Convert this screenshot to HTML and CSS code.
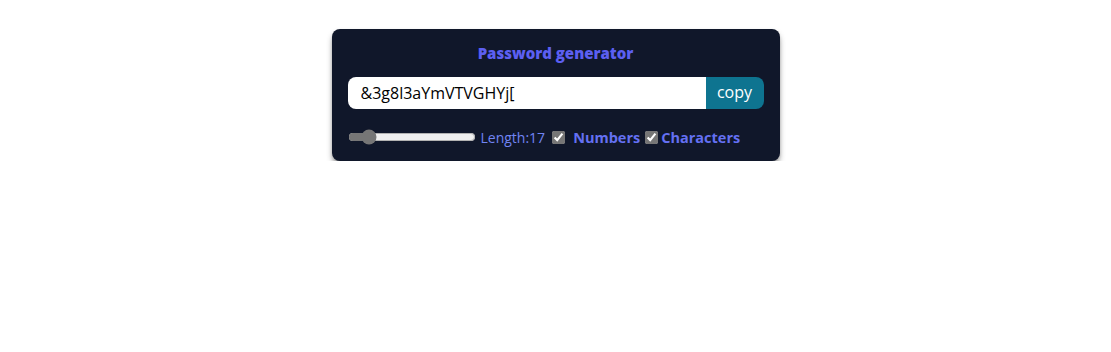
FILE: index.html
```html
<!DOCTYPE html>
<html>
<head>
<meta charset="utf-8">
<link rel="stylesheet" href="styles.css">
</head>
<body>
<div class="card">
  <h1 class="title">Password generator</h1>
  <div class="field">
    <input class="pw" type="text" value="&amp;3g8l3aYmVTVGHYj[" readonly>
    <button class="copy">copy</button>
  </div>
  <div class="options">
    <input class="range" type="range" min="6" max="100" value="17">
    <label class="len">Length:17</label>
    <input class="check" type="checkbox" checked id="num">
    <label class="opt" for="num">Numbers</label>
    <input class="check tight" type="checkbox" checked id="chr">
    <label class="opt" for="chr">Characters</label>
  </div>
</div>
</body>
</html>
```

FILE: styles.css
```css
* { box-sizing: border-box; }
body {
  margin: 0;
  background: #ffffff;
  font-family: "Open Sans", "Noto Sans", sans-serif;
}
.card {
  width: 448px;
  margin: 29px auto 0;
  background: #10172a;
  border-radius: 8px;
  padding: 12px 16px 12px;
  box-shadow: 0 4px 6px -1px rgba(0,0,0,0.45), 0 2px 4px -2px rgba(0,0,0,0.35);
}
.title {
  margin: 0 0 12px;
  text-align: center;
  font-size: 15px;
  line-height: 24px;
  font-weight: 800;
  color: #5c5ff1;
}
.field {
  display: flex;
  height: 32px;
  border-radius: 8px;
  overflow: hidden;
}
.pw {
  flex: 1;
  min-width: 0;
  border: 0;
  outline: none;
  padding: 0 12px 0 13px;
  font-family: inherit;
  font-size: 16px;
  color: #000;
  background: #fff;
}
.copy {
  width: 58px;
  border: 0;
  background: #0e7490;
  color: #fff;
  font-family: inherit;
  font-size: 16px;
  padding: 0 0 2px;
}
.options {
  display: flex;
  align-items: center;
  height: 24px;
  margin-top: 16px;
  font-size: 14.5px;
}
.range {
  width: 128px;
  margin: 0 5px 0 0;
  accent-color: #767676;
}
.len {
  color: #7184f3;
  font-size: 14px;
  margin-right: 7px;
}
.check {
  width: 13px;
  height: 13px;
  margin: 0 8px 0 0;
  accent-color: #767676;
}
.check.tight {
  margin: 0 3px 0 5px;
}
.opt {
  color: #6470f2;
  font-weight: 700;
}
```
